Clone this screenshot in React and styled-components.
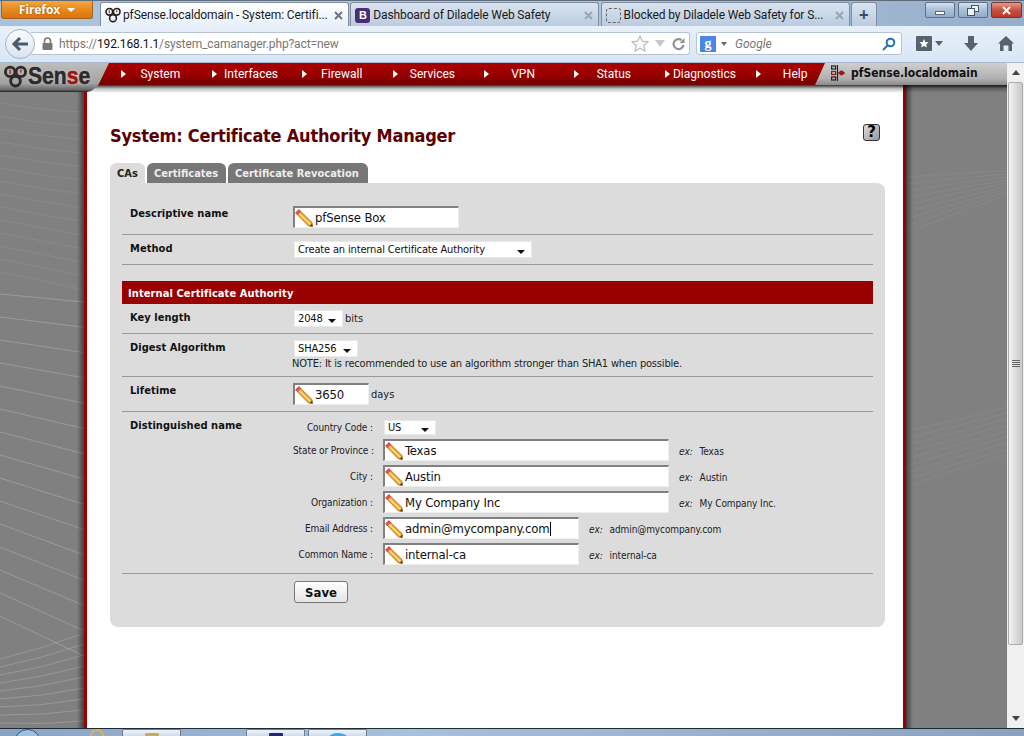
import React from "react";
import styled, { createGlobalStyle } from "styled-components";

const UI_FONT = `Roboto, "Noto Sans", sans-serif`;
const PAGE_FONT = `"DejaVu Sans Condensed", "DejaVu Sans", sans-serif`;

const GlobalStyle = createGlobalStyle`
  html, body { margin: 0; padding: 0; overflow: hidden; background: #fff; }
  * { box-sizing: border-box; }
`;

// BROWSER ICONS
const PfGlyph = ({ size = 16, color = "#222", weight = 1.6 }) => (
  <svg width={size} height={size} viewBox="0 0 16 16" fill="none">
    <circle cx="4.3" cy="4.8" r="3.3" stroke={color} strokeWidth={weight} />
    <circle cx="11.7" cy="4.8" r="3.3" stroke={color} strokeWidth={weight} />
    <circle cx="8" cy="11.2" r="3.4" stroke={color} strokeWidth={weight} />
    <path d="M4.3 3.2v3M11.7 3.200v2" stroke="#c33" strokeWidth="1.3" />
  </svg>
);

const Pencil = () => (
  <svg width="18" height="18" viewBox="0 0 18 18" fill="none">
    <path d="M0.800 4 4 0.800 17 13.500 17.500 17.500 13.500 17Z" fill="#f0a62c" stroke="#a9691a" strokeWidth="0.8" />
    <path d="M3 3.400 15.500 15.500" stroke="#fde08a" strokeWidth="1.500" />
    <path d="M0.600 3.800 3.800 0.600 5.800 2.600 2.600 5.800Z" fill="#e8505a" stroke="#b53440" strokeWidth="0.5" />
    <path d="M14.600 17 17 14.600 17.600 17.600Z" fill="#5b4326" />
  </svg>
);

const XMark = ({ color = "#6b7480" }) => (
  <svg width="9" height="9" viewBox="0 0 9 9" style={{ flex: "none" }}>
    <path d="M1 1 8 8M8 1 1 8" stroke={color} strokeWidth="2" />
  </svg>
);

// PAGE FRAME
const Screen = styled.div`
  width: 1024px;
  height: 736px;
  display: flex;
  flex-direction: column;
  overflow: hidden;
  font-family: ${PAGE_FONT};
`;

const TabStrip = styled.div`
  height: 26px;
  flex: none;
  display: flex;
  align-items: flex-start;
  padding-left: 1px;
  background: linear-gradient(to right, #a9c1da, #b4c8dd 50%, #95aeca);
  border-top: 1px solid #5d6b7a;
`;

const FirefoxButton = styled.div`
  width: 92px;
  height: 18px;
  display: flex;
  align-items: center;
  justify-content: center;
  gap: 7px;
  margin-right: 7px;
  color: #fff;
  font: 700 12px "Noto Sans", sans-serif;
  background: linear-gradient(#f7a740, #e78a1e 50%, #d9720f);
  border: 1px solid #a8641c;
  border-top: none;
  border-radius: 0 0 3px 3px;
  text-shadow: 0 0 2px #8a4b08;

  &::after {
    content: "";
    border: 4px solid transparent;
    border-top: 4px solid #fff;
    margin-top: 4px;
  }
`;

const Tab = styled.div`
  width: ${(p) => p.$width || 249}px;
  height: 25px;
  margin-top: 1px;
  margin-right: 1.300px;
  padding: 0 5px 0 4px;
  display: flex;
  align-items: center;
  gap: 2px;
  flex: none;
  font: 12px ${UI_FONT};
  letter-spacing: -0.12px;
  color: #1a1a1a;
  border: 1px solid #7f8fa3;
  border-bottom: none;
  border-radius: 3px 3px 0 0;
  background: ${(p) =>
    p.$active
      ? "linear-gradient(#fff, #e6eff9)"
      : "linear-gradient(#d9e3ee, #b9cbdf)"};
`;

const TabTitle = styled.span`
  flex: 1;
  min-width: 0;
  white-space: nowrap;
  overflow: hidden;
`;

const BootstrapMark = styled.span`
  width: 15px;
  height: 15px;
  flex: none;
  margin-right: 1px;
  border-radius: 3px;
  background: #4b2e72;
  color: #fff;
  font: 700 11px/15px "Liberation Sans", sans-serif;
  text-align: center;
`;

const DashedMark = styled.span`
  width: 15px;
  height: 15px;
  flex: none;
  margin-right: 1px;
  border: 1px dashed #666;
  border-radius: 3px;
`;

const NewTab = styled(Tab)`
  padding: 0 0 2px;
  justify-content: center;
  font: 700 17px "Noto Sans", sans-serif;
  color: #3c4c5c;
`;

const WindowButtons = styled.div`
  margin-left: auto;
  margin-top: 1px;
  margin-right: 2px;
  display: flex;
  gap: 3px;
`;

const WindowButton = styled.div`
  width: ${(p) => (p.$close ? 31 : 30)}px;
  height: 16px;
  display: flex;
  align-items: center;
  justify-content: center;
  border: 1px solid ${(p) => (p.$close ? "#7c3430" : "#5f7086")};
  border-radius: 2px;
  background: ${(p) =>
    p.$close
      ? "linear-gradient(#e59a8c, #c8503f 50%, #b93a2c)"
      : "linear-gradient(#d5e1ee, #a9bfd7 50%, #93adc9)"};
`;

const MinGlyph = styled.span`
  width: 10px;
  height: 4px;
  margin-top: 5px;
  background: #fff;
  border: 1px solid #59677a;
`;

const NavBar = styled.div`
  height: 37px;
  flex: none;
  display: flex;
  align-items: center;
  padding: 0 10px 1px 5px;
  background: linear-gradient(#e7f0fa, #d8e6f5);
  border-bottom: 1px solid #a9bad0;
`;

const BackButton = styled.div`
  width: 30px;
  height: 30px;
  flex: none;
  display: flex;
  align-items: center;
  justify-content: center;
  position: relative;
  z-index: 1;
  border-radius: 50%;
  border: 1px solid #a3b3c6;
  background: linear-gradient(#f8fbfe, #d9e4f0);
`;

const UrlBar = styled.div`
  width: 659px;
  height: 23px;
  margin-left: -4px;
  padding: 0 3px 0 11px;
  display: flex;
  align-items: center;
  background: #fff;
  border: 1px solid #b4c3d6;
  border-left: none;
  border-radius: 0 3px 3px 0;
  font: 12px ${UI_FONT};
  letter-spacing: -0.12px;
  color: #777;
`;

const Host = styled.span`
  color: #111;
`;

const UrlText = styled.span`
  margin-left: 6px;
  flex: 1;
`;

const UrlIcons = styled.div`
  display: flex;
  align-items: center;
  gap: 6px;
`;

const SearchBar = styled.div`
  width: 206px;
  height: 23px;
  margin-left: 6px;
  padding: 0 5px 0 3px;
  display: flex;
  align-items: center;
  gap: 5px;
  background: #fff;
  border: 1px solid #b4c3d6;
  border-radius: 3px;
`;

const GoogleMark = styled.span`
  width: 16px;
  height: 16px;
  background: #4a86e8;
  color: #fff;
  font: 700 14px/15px "Liberation Serif", serif;
  text-align: center;
`;

const SearchCaret = styled.span`
  border: 3px solid transparent;
  border-top: 4px solid #666;
  margin-top: 4px;
`;

const SearchHint = styled.span`
  flex: 1;
  margin-left: 3px;
  font: italic 12px ${UI_FONT};
  color: #777;
`;

const NavTools = styled.div`
  flex: 1;
  display: flex;
  align-items: center;
  justify-content: space-between;
  padding-left: 14px;
`;

const BookmarkTool = styled.div`
  display: flex;
  align-items: center;
  gap: 3px;
`;

const Viewport = styled.div`
  flex: 1;
  min-height: 0;
  display: flex;
`;

const PageColumn = styled.div`
  width: 1007px;
  display: flex;
  flex-direction: column;
`;

// PFSENSE MENU
const MenuBar = styled.div`
  height: 22px;
  flex: none;
  display: flex;
  align-items: flex-start;
  position: relative;
  z-index: 2;
  background: linear-gradient(#a80000, #990000 55%, #6e0000);
`;

const LogoBlock = styled.div`
  width: 109px;
  height: 29px;
  flex: none;
  display: flex;
  align-items: center;
  gap: 1px;
  padding: 0 0 3px 4px;
  background: linear-gradient(#bdbdbd, #a2a2a2 70%, #6a6a6a 92%, #222);
  clip-path: polygon(0 0, 100% 0, 90% 78%, 84% 96%, 80% 100%, 0 100%);
`;

const LogoText = styled.span`
  font: 700 24px/24px "Liberation Sans", sans-serif;
  color: #2b2b2b;
  -webkit-text-stroke: 0.6px #2b2b2b;
  transform: scaleX(0.88);
  transform-origin: left center;
  text-shadow: 0 0 3px #e4e4e4;
`;

const LogoRed = styled.span`
  color: #a11212;
  -webkit-text-stroke: 0.6px #a11212;
`;

const MenuItems = styled.div`
  width: 726px;
  flex: none;
  display: grid;
  grid-template-columns: repeat(8, 90.7px);
  padding-left: 12px;
`;

const MenuItem = styled.div`
  height: 21px;
  display: flex;
  align-items: center;
  padding-right: 17px;
  color: #fff;
  font: 12px ${UI_FONT};

  &::before {
    content: "";
    border: 4px solid transparent;
    border-left: 5px solid #fff;
    border-right: none;
    flex: none;
  }
`;

const MenuLabel = styled.span`
  flex: 1;
  text-align: center;
`;

const HostBlock = styled.div`
  flex: 1;
  height: 22px;
  display: flex;
  align-items: center;
  gap: 6px;
  padding: 0 0 3px 16px;
  margin-left: -20px;
  font: 700 12px ${PAGE_FONT};
  color: #111;
  background: linear-gradient(#cfcfcf, #b0b0b0 70%, #8b8b8b);
  clip-path: polygon(10px 0, 100% 0, 100% 100%, 0 100%);
`;

const Body = styled.div`
  flex: 1;
  min-height: 0;
  display: flex;
  position: relative;
`;

const TopShadow = styled.div`
  position: absolute;
  left: 0;
  right: 0;
  top: 0;
  height: 8px;
  z-index: 1;
  background: linear-gradient(rgba(0, 0, 0, 0.8), rgba(0, 0, 0, 0.25) 45%, rgba(0, 0, 0, 0));
`;

const Side = styled.div`
  width: ${(p) => p.$width}px;
  flex: none;
  position: relative;
  overflow: hidden;
  background: #808080;

  &::after {
    content: "";
    position: absolute;
    inset: 0;
    background: linear-gradient(
      ${(p) => (p.$right ? "to left" : "to right")},
      rgba(0, 0, 0, 0) calc(100% - 7px),
      rgba(0, 0, 0, 0.5)
    );
  }
`;

const SideArt = styled.svg`
  display: block;
`;

const Content = styled.main`
  flex: 1;
  min-width: 0;
  padding: 39px 18px 0 23px;
  background: #fff;
  border-left: 3px solid #990000;
  border-right: 3px solid #990000;
`;

const TitleRow = styled.div`
  display: flex;
  justify-content: space-between;
  align-items: flex-start;
  padding-right: 5px;
`;

const Title = styled.h1`
  margin: 0;
  font: 700 18px/24px ${PAGE_FONT};
  letter-spacing: -0.22px;
  color: #5a0000;
`;

const HelpIcon = styled.div`
  width: 17px;
  height: 17px;
  border: 1px solid #333;
  border-radius: 3px;
  background: linear-gradient(135deg, #ddd, #999);
  color: #000;
  text-align: center;
  font: 900 15px/15px "DejaVu Sans", sans-serif;
`;

const TabRow = styled.div`
  display: flex;
  gap: 2px;
  margin-top: 15px;
  height: 20px;
`;

const PageTab = styled.div`
  width: ${(p) => p.$width}px;
  height: 20px;
  padding-left: 7px;
  display: flex;
  align-items: center;
  white-space: nowrap;
  font: 700 11px ${PAGE_FONT};
  border-radius: 6px 6px 0 0;
  color: ${(p) => (p.$active ? "#222" : "#eee")};
  background: ${(p) => (p.$active ? "#dcdcdc" : "#777")};
`;

const Panel = styled.div`
  height: 444px;
  padding: 17px 12px 0;
  background: #dcdcdc;
  border-radius: 0 8px 8px 8px;
`;

const Row = styled.div`
  display: grid;
  grid-template-columns: 171px 1fr;
  padding: ${(p) => (p.$flat ? "7px 0 0" : "6px 0")};
  border-bottom: ${(p) => (p.$flat ? "none" : "1px solid #999")};
`;

const RowLabel = styled.div`
  padding: 1px 0 0 8px;
  font: 700 11px/14px ${PAGE_FONT};
  letter-spacing: 0.05px;
  color: #111;
`;

const SectionHead = styled.div`
  height: 23px;
  margin-top: 16px;
  padding: 2px 0 0 6px;
  display: flex;
  align-items: center;
  background: #990000;
  color: #fff;
  font: 700 11px ${PAGE_FONT};
  letter-spacing: 0.1px;
`;

const Inline = styled.div`
  display: flex;
  align-items: center;
  gap: 2px;
  font: 11px ${PAGE_FONT};
  color: #222;
`;

const Note = styled.div`
  height: 13px;
  margin-left: -1px;
  font: 11px/13px ${PAGE_FONT};
  letter-spacing: -0.18px;
  color: #222;
`;

const SelectBox = styled.div`
  width: ${(p) => p.$width}px;
  height: ${(p) => p.$height || 17}px;
  margin-left: 1px;
  padding: 0 4px 0 3px;
  display: flex;
  align-items: center;
  justify-content: space-between;
  background: #fff;
  border: 1px solid #e9e9e9;
  font: 11px ${PAGE_FONT};
  letter-spacing: -0.15px;
  color: #111;

  &::after {
    content: "";
    margin: 4px 2px 0 0;
    border: 4px solid transparent;
    border-top: 4px solid #111;
    border-bottom: none;
  }
`;

const InputBox = styled.div`
  width: ${(p) => p.$width}px;
  height: 22px;
  display: flex;
  align-items: center;
  gap: 2px;
  flex: none;
  background: #fff;
  border-top: 2px solid #808080;
  border-left: 2px solid #808080;
  border-right: 1px solid #eee;
  border-bottom: 1px solid #eee;
  font: 13px ${PAGE_FONT};
  letter-spacing: -0.15px;
  color: #111;
`;

const Caret = styled.span`
  width: 1px;
  height: 14px;
  margin-left: -2px;
  background: #000;
`;

const FieldStack = styled.div`
  display: flex;
  flex-direction: column;
  gap: 4px;
  margin: 2px 0 2px;
`;

const FieldRow = styled.div`
  display: flex;
  align-items: center;
  min-height: 15px;
`;

const FieldLabel = styled.div`
  width: 80px;
  margin-right: 10px;
  flex: none;
  text-align: right;
  white-space: nowrap;
  font: 10px ${PAGE_FONT};
  letter-spacing: -0.1px;
  color: #222;
`;

const Example = styled.div`
  margin-left: 10px;
  display: flex;
  gap: 7px;
  padding-top: 3px;
  font: 10px ${PAGE_FONT};
  letter-spacing: -0.1px;
  color: #222;
`;

const SaveButton = styled.button`
  width: 54px;
  height: 22px;
  margin-left: 1px;
  padding: 0;
  border: 1px solid #777;
  border-radius: 3px;
  background: linear-gradient(#fff, #e4e4e4);
  color: #111;
  font: 700 13px ${PAGE_FONT};
`;

// SCROLLBAR + TASKBAR
const ScrollBar = styled.div`
  width: 17px;
  flex: none;
  display: flex;
  flex-direction: column;
  align-items: center;
  background: #f0f0f0;
`;

const ScrollArrow = styled.div`
  height: ${(p) => p.$height}px;
  flex: none;
  display: flex;
  align-items: center;
  justify-content: center;
`;

const ScrollThumb = styled.div`
  width: 15px;
  height: 563px;
  flex: none;
  display: flex;
  flex-direction: column;
  align-items: center;
  justify-content: center;
  gap: 1px;
  border: 1px solid #aaa;
  border-radius: 2px;
  background: linear-gradient(to right, #f4f4f4, #dcdcdc 50%, #c9c9c9);
`;

const Grip = styled.span`
  width: 8px;
  height: 1px;
  background: #666;
`;

const ScrollSpacer = styled.div`
  flex: 1;
`;

const Taskbar = styled.div`
  height: 8px;
  flex: none;
  display: flex;
  padding-left: 14px;
  overflow: hidden;
  border-top: 1px solid #1c2a3a;
  background: linear-gradient(to right, #8aa3c0, #a9c0da 40%, #8ba1bc);
`;

const StartOrb = styled.div`
  width: 27px;
  height: 27px;
  flex: none;
  margin-right: 49px;
  border: 1px solid #33557c;
  border-radius: 50%;
  background: #9fc0e0;
`;

const QuickIcon = styled.div`
  width: 14px;
  height: 14px;
  flex: none;
  margin-right: 18px;
  border: 2px solid #e0b14a;
  border-radius: 50%;
`;

const TaskButton = styled.div`
  width: 59px;
  margin-right: ${(p) => p.$gap || 3}px;
  flex: none;
  display: flex;
  justify-content: center;
  padding-top: 3px;
  border: 1px solid #6d7d90;
  border-bottom: none;
  border-radius: 2px 2px 0 0;
  background: linear-gradient(#eef3f8, #d0dce9);
`;

const TaskIcon = styled.span`
  width: ${(p) => p.$width}px;
  height: 12px;
  background: ${(p) => p.$color};
  border-radius: ${(p) => (p.$round ? "50%" : "1px")};
`;

// RENDER HELPERS
const leftFaint = Array.from({ length: 14 }, (_, i) => {
  const y = 18 + i * 13;
  return `M0 ${y}Q42 ${y + 8} 84 ${y + 9 + i * 0.7}`;
});

const leftLines = Array.from({ length: 15 }, (_, i) => {
  const y = 209 + i * 23;
  return `M0 ${y}L84 ${y + 8 + i * 2.3}`;
});

const leftCurves = Array.from({ length: 9 }, (_, i) => {
  const y = 574 + i * 8;
  const end = 548 + i * 11;
  return `M0 ${y}Q42 ${(y + end) / 2 + 3} 84 ${end}`;
});

const rightBands = Array.from({ length: 9 }, (_, i) => `M0 ${92 + i * 7}Q50 ${88 + i * 5} 101 ${86 + i * 3}`).concat(
  Array.from({ length: 9 }, (_, i) => `M0 ${346 + i * 7}Q50 ${336 + i * 6} 101 ${322 + i * 6}`)
);

const Input = ({ width, value, caret }) => (
  <InputBox $width={width}>
    <Pencil />
    <span>{value}</span>
    {caret && <Caret />}
  </InputBox>
);

const Field = ({ label, value, width = 286, example, caret }) => (
  <FieldRow>
    <FieldLabel>{label}</FieldLabel>
    <Input width={width} value={value} caret={caret} />
    <Example>
      <i>ex:</i>
      <span>{example}</span>
    </Example>
  </FieldRow>
);

const menu = ["System", "Interfaces", "Firewall", "Services", "VPN", "Status", "Diagnostics", "Help"];

const App = () => {
  return (
    <Screen>
      <GlobalStyle />
      <TabStrip>
        <FirefoxButton>Firefox</FirefoxButton>
        <Tab $active>
          <PfGlyph />
          <TabTitle>pfSense.localdomain - System: Certifi...</TabTitle>
          <XMark />
        </Tab>
        <Tab>
          <BootstrapMark>B</BootstrapMark>
          <TabTitle>Dashboard of Diladele Web Safety</TabTitle>
          <XMark color="#9aa6b4" />
        </Tab>
        <Tab>
          <DashedMark />
          <TabTitle>Blocked by Diladele Web Safety for S...</TabTitle>
          <XMark color="#9aa6b4" />
        </Tab>
        <NewTab $width={26}>+</NewTab>
        <WindowButtons>
          <WindowButton><MinGlyph /></WindowButton>
          <WindowButton>
            <svg width="12" height="11" viewBox="0 0 12 11" fill="none" stroke="#44546a">
              <rect x="4.5" y="0.5" width="7" height="6" fill="#eef3f8" />
              <rect x="0.5" y="3.5" width="7" height="7" fill="#eef3f8" />
            </svg>
          </WindowButton>
          <WindowButton $close><XMark color="#fff" /></WindowButton>
        </WindowButtons>
      </TabStrip>

      <NavBar>
        <BackButton>
          <svg width="18" height="16" viewBox="0 0 18 16" fill="none" stroke="#4a5a6c" strokeWidth="3">
            <path d="M17 8H3M9 2 3 8l6 6" />
          </svg>
        </BackButton>
        <UrlBar>
          <svg width="11" height="13" viewBox="0 0 11 13">
            <path d="M2.5 6V4a3 3 0 0 1 6 0v2" fill="none" stroke="#777" strokeWidth="1.6" />
            <rect x="0.5" y="6" width="10" height="7" rx="1" fill="#777" />
          </svg>
          <UrlText>
            https://<Host>192.168.1.1</Host>/system_camanager.php?act=new
          </UrlText>
          <UrlIcons>
            <svg width="18" height="17" viewBox="0 0 18 17" fill="#fbfbfb" stroke="#b9bdc2" strokeWidth="1.2">
              <path d="m9 1 2.4 5.2 5.6.6-4.2 3.7 1.2 5.5L9 13.2 4 16l1.2-5.5L1 6.8l5.6-.6Z" />
            </svg>
            <svg width="10" height="7" viewBox="0 0 10 7"><path d="M0 0h10L5 7Z" fill="#c3c8ce" /></svg>
            <svg width="15" height="14" viewBox="0 0 14 14" fill="none" stroke="#8d9399" strokeWidth="2.2">
              <path d="M12 8a5 5 0 1 1-2-5" />
              <path d="M13 1v5H8Z" fill="#8d9399" stroke="none" />
            </svg>
          </UrlIcons>
        </UrlBar>
        <SearchBar>
          <GoogleMark>g</GoogleMark>
          <SearchCaret />
          <SearchHint>Google</SearchHint>
          <svg width="14" height="14" viewBox="0 0 14 14" fill="none" stroke="#2a6fb5" strokeWidth="2">
            <circle cx="8.5" cy="5.5" r="3.8" />
            <path d="M5.5 8.5 1 13" />
          </svg>
        </SearchBar>
        <NavTools>
          <BookmarkTool>
            <svg width="16" height="15" viewBox="0 0 16 15">
              <rect width="16" height="15" rx="1" fill="#56626f" />
              <path d="m8 3 1.4 3 3.2.3-2.4 2.1.7 3.1L8 10l-2.9 1.5.7-3.1-2.4-2.1L6.600 6Z" fill="#fff" />
            </svg>
            <svg width="8" height="5" viewBox="0 0 8 5"><path d="M0 0h8L4 5Z" fill="#56626f" /></svg>
          </BookmarkTool>
          <svg width="14" height="15" viewBox="0 0 14 15"><path d="M4 0h6v7h4l-7 8-7-8h4Z" fill="#56626f" /></svg>
          <svg width="16" height="15" viewBox="0 0 16 15">
            <path d="M8 0 16 7.500h-2V15h-3.500V9.500h-5V15H2V7.500H0Z" fill="#56626f" />
          </svg>
        </NavTools>
      </NavBar>

      <Viewport>
        <PageColumn>
          <MenuBar>
            <LogoBlock>
              <PfGlyph size={23} color="#2b2b2b" weight={2} />
              <LogoText>Sen<LogoRed>s</LogoRed>e</LogoText>
            </LogoBlock>
            <MenuItems>
              {menu.map((name) => (
                <MenuItem key={name}><MenuLabel>{name}</MenuLabel></MenuItem>
              ))}
            </MenuItems>
            <HostBlock>
              <svg width="14" height="16" viewBox="0 0 14 16" fill="none" stroke="#222" strokeWidth="1.200">
                <rect x="0.600" y="1" width="4" height="3" />
                <rect x="0.600" y="6.500" width="4" height="3" stroke="#a11" />
                <rect x="0.600" y="12" width="4" height="3" />
                <path d="M6.500 0v16M6.500 8H14" />
                <circle cx="10.500" cy="8" r="1.800" fill="#a11" stroke="#a11" />
              </svg>
              pfSense.localdomain
            </HostBlock>
          </MenuBar>

          <Body>
            <TopShadow />
            <Side $width={84}>
              <SideArt width="84" height="643" viewBox="0 0 84 643" fill="none">
                <path d={leftFaint.join("")} stroke="#fff" strokeOpacity="0.08" />
                <path d={leftLines.join("")} stroke="#fff" strokeOpacity="0.2" />
                <path d={leftCurves.join("")} stroke="#fff" strokeOpacity="0.18" />
              </SideArt>
            </Side>
            <Content>
              <TitleRow>
                <Title>System: Certificate Authority Manager</Title>
                <HelpIcon>?</HelpIcon>
              </TitleRow>
              <TabRow>
                <PageTab $active $width={35}>CAs</PageTab>
                <PageTab $width={79}>Certificates</PageTab>
                <PageTab $width={140}>Certificate Revocation</PageTab>
              </TabRow>
              <Panel>
                <Row>
                  <RowLabel>Descriptive name</RowLabel>
                  <Input width={166} value="pfSense Box" />
                </Row>
                <Row>
                  <RowLabel>Method</RowLabel>
                  <SelectBox $width={238}>Create an internal Certificate Authority</SelectBox>
                </Row>
                <SectionHead>Internal Certificate Authority</SectionHead>
                <Row>
                  <RowLabel>Key length</RowLabel>
                  <Inline>
                    <SelectBox $width={49}>2048</SelectBox>
                    bits
                  </Inline>
                </Row>
                <Row>
                  <RowLabel>Digest Algorithm</RowLabel>
                  <div>
                    <SelectBox $width={64}>SHA256</SelectBox>
                    <Note>NOTE: It is recommended to use an algorithm stronger than SHA1 when possible.</Note>
                  </div>
                </Row>
                <Row>
                  <RowLabel>Lifetime</RowLabel>
                  <Inline>
                    <Input width={76} value="3650" />
                    days
                  </Inline>
                </Row>
                <Row>
                  <RowLabel>Distinguished name</RowLabel>
                  <FieldStack>
                    <FieldRow>
                      <FieldLabel>Country Code :</FieldLabel>
                      <SelectBox $width={52} $height={15}>US</SelectBox>
                    </FieldRow>
                    <Field label="State or Province :" value="Texas" example="Texas" />
                    <Field label="City :" value="Austin" example="Austin" />
                    <Field label="Organization :" value="My Company Inc" example="My Company Inc." />
                    <Field label="Email Address :" value="admin@mycompany.com" width={196} example="admin@mycompany.com" caret />
                    <Field label="Common Name :" value="internal-ca" width={196} example="internal-ca" />
                  </FieldStack>
                </Row>
                <Row $flat>
                  <span />
                  <div><SaveButton>Save</SaveButton></div>
                </Row>
              </Panel>
            </Content>
            <Side $width={101} $right>
              <SideArt width="101" height="643" viewBox="0 0 101 643" fill="none">
                <path d={rightBands.join("")} stroke="#fff" strokeOpacity="0.06" />
              </SideArt>
            </Side>
          </Body>
        </PageColumn>

        <ScrollBar>
          <ScrollArrow $height={19}>
            <svg width="8" height="5" viewBox="0 0 8 5"><path d="M4 0 8 5H0Z" fill="#444" /></svg>
          </ScrollArrow>
          <ScrollThumb>
            <Grip /><Grip /><Grip /><Grip />
          </ScrollThumb>
          <ScrollSpacer />
          <ScrollArrow $height={19}>
            <svg width="8" height="5" viewBox="0 0 8 5"><path d="M0 0h8L4 5Z" fill="#444" /></svg>
          </ScrollArrow>
        </ScrollBar>
      </Viewport>

      <Taskbar>
        <StartOrb />
        <QuickIcon />
        <TaskButton $gap={65}><TaskIcon $width={14} $color="#c9a860" /></TaskButton>
        <TaskButton><TaskIcon $width={14} $color="#23237a" /></TaskButton>
        <TaskButton><TaskIcon $width={20} $color="#3ba6e8" $round /></TaskButton>
      </Taskbar>
    </Screen>
  );
};

export default App;
